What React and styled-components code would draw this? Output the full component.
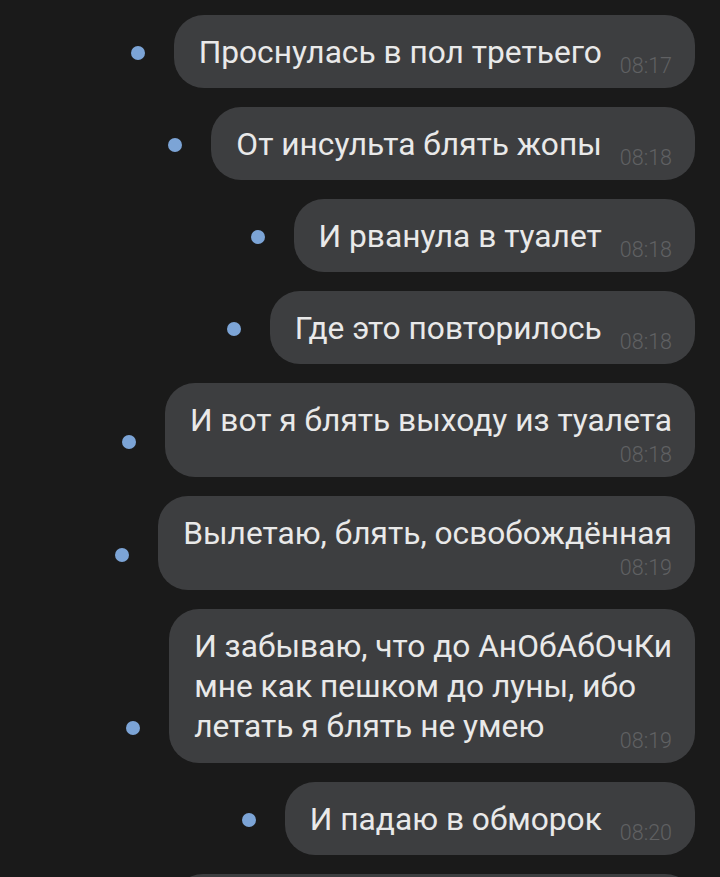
import React from 'react';
import styled, { createGlobalStyle } from 'styled-components';

const GlobalStyle = createGlobalStyle`
  html, body {
    margin: 0;
    padding: 0;
    background: #1a1a1a;
    height: 877px;
    overflow: hidden;
  }
  body {
    font-family: Roboto, "Noto Sans", sans-serif;
  }
`;

const Chat = styled.div`
  display: flex;
  flex-direction: column;
  gap: 19px;
  padding: 15px 25px 0 0;
`;

const Row = styled.div`
  display: flex;
  justify-content: flex-end;
  align-items: flex-end;
  gap: 29px;
`;

const Dot = styled.span`
  flex: none;
  width: 14px;
  height: 14px;
  border-radius: 50%;
  background: #7ca4d6;
  margin-bottom: 28px;
`;

const Bubble = styled.div`
  display: flex;
  flex-direction: ${p => (p.$stacked ? 'column' : 'row')};
  align-items: flex-end;
  gap: ${p => (p.$stacked ? 5 : 18)}px;
  box-sizing: border-box;
  min-height: 73px;
  width: ${p => (p.$width ? `${p.$width}px` : 'auto')};
  padding: 18px 23px 16px 25px;
  border-radius: 30px;
  background: #3d3e40;
`;

const Text = styled.div`
  flex: none;
  align-self: ${p => (p.$stacked ? 'stretch' : 'auto')};
  font-size: 31.7px;
  line-height: 39px;
  color: #e9e9e9;
  white-space: nowrap;
`;

const Time = styled.span`
  flex: none;
  font-size: 21.5px;
  font-weight: 300;
  line-height: 20px;
  color: #606163;
  margin-bottom: -4px;
`;

const Overlay = styled.div`
  display: grid;

  & > * {
    grid-area: 1 / 1;
  }

  & > span {
    justify-self: end;
    align-self: end;
  }
`;

const Multi = styled.div`
  font-size: 31.7px;
  line-height: 40px;
  color: #e9e9e9;
  white-space: nowrap;
`;

const messages = [
  { text: 'Проснулась в пол третьего', time: '08:17' },
  { text: 'От инсульта блять жопы', time: '08:18' },
  { text: 'И рванула в туалет', time: '08:18' },
  { text: 'Где это повторилось', time: '08:18' },
  { text: 'И вот я блять выходу из туалета', time: '08:18', stacked: true },
  { text: 'Вылетаю, блять, освобождённая', time: '08:19', stacked: true },
  {
    lines: ['И забываю, что до АнОбАбОчКи', 'мне как пешком до луны, ибо', 'летать я блять не умею'],
    time: '08:19',
  },
  { text: 'И падаю в обморок', time: '08:20' },
];

export default function App() {
  return (
    <>
      <GlobalStyle />
      <Chat>
        {messages.map((m, i) => (
          <Row key={i}>
            <Dot />
            {m.lines ? (
              <Bubble>
                <Overlay>
                  <Multi>
                    {m.lines.map((l, j) => (
                      <div key={j}>{l}</div>
                    ))}
                  </Multi>
                  <Time>{m.time}</Time>
                </Overlay>
              </Bubble>
            ) : (
              <Bubble $stacked={m.stacked}>
                <Text $stacked={m.stacked}>{m.text}</Text>
                <Time>{m.time}</Time>
              </Bubble>
            )}
          </Row>
        ))}
        <Row>
          <Bubble $width={522} />
        </Row>
      </Chat>
    </>
  );
}
